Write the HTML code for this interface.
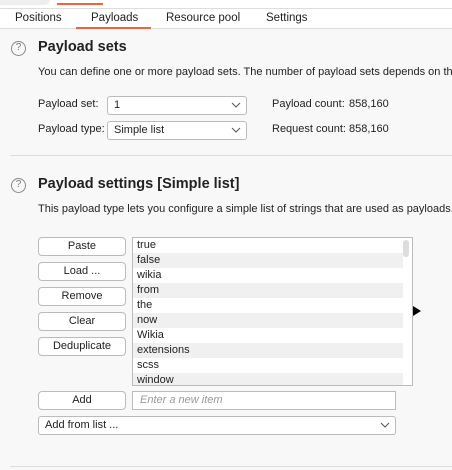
<!DOCTYPE html>
<html><head><style>
*{margin:0;padding:0;box-sizing:border-box}
body{width:452px;height:470px;overflow:hidden;background:#f8f8f8;font-family:"Liberation Sans",sans-serif;font-size:11px;color:#222;position:relative}
.a{position:absolute;white-space:nowrap}
.top{position:absolute;left:0;top:0;width:452px;height:8px;background:#fff}
.tabs{position:absolute;left:0;top:8px;width:452px;height:21px;background:#fff;border-top:1px solid #ddd;border-bottom:1px solid #ddd;font-size:11.5px}
.help{position:absolute;width:15px;height:15px;border:1.3px solid #888;border-radius:50%;font-size:10px;color:#777;text-align:center;line-height:12px}
.h{font-weight:bold;font-size:14.5px}
.dd{position:absolute;background:#fff;border:1px solid #bbb;border-radius:3px;padding-left:6px;line-height:17px}
.dd svg{position:absolute;right:5px;top:5px}
.btn{position:absolute;left:38px;width:88px;height:19px;background:#fff;border:1px solid #bbb;border-radius:4px;text-align:center;line-height:17px}
.list{position:absolute;left:132px;top:237px;width:281px;height:149px;background:#fff;border:1px solid #bbb;overflow:hidden}
.row{height:15px;line-height:14px;padding-left:4px;width:270px}
.row.s{background:#f0f0f0}
.sep{position:absolute;left:10px;width:442px;height:1px;background:#ddd}
.clip{position:absolute;left:0;top:0;width:452px;height:470px;overflow:hidden}
</style></head><body><div class="clip">
<div class="top"><div class="a" style="left:0;top:0;width:50px;height:5px;background:#eee;border-radius:0 0 6px 0"></div><div class="a" style="left:57px;top:3px;width:46px;height:2px;background:#f0643c"></div></div>
<div class="tabs">
<span class="a" style="left:15px;top:3px">Positions</span>
<span class="a" style="left:91px;top:3px">Payloads</span>
<span class="a" style="left:166px;top:3px">Resource pool</span>
<span class="a" style="left:266px;top:3px">Settings</span>
<div class="a" style="left:76px;top:18px;width:75px;height:2px;background:#f0643c"></div>
</div>
<div class="help" style="left:11px;top:41px">?</div>
<div class="a h" style="left:38px;top:39px">Payload sets</div>
<div class="a" style="left:38px;top:66px">You can define one or more payload sets. The number of payload sets depends on the at</div>
<div class="a" style="left:38px;top:98px">Payload set:</div>
<div class="dd" style="left:107px;top:96px;width:140px;height:19px">1<svg width="10" height="6"><path d="M1 1L5 5L9 1" stroke="#555" fill="none"/></svg></div>
<div class="a" style="left:38px;top:123px">Payload type:</div>
<div class="dd" style="left:107px;top:121px;width:140px;height:19px">Simple list<svg width="10" height="6"><path d="M1 1L5 5L9 1" stroke="#555" fill="none"/></svg></div>
<div class="a" style="left:272px;top:98px">Payload count:</div><div class="a" style="left:349px;top:98px">858,160</div>
<div class="a" style="left:272px;top:123px">Request count:</div><div class="a" style="left:349px;top:123px">858,160</div>
<div class="sep" style="top:155px"></div>
<div class="help" style="left:11px;top:178px">?</div>
<div class="a h" style="left:38px;top:176px">Payload settings [Simple list]</div>
<div class="a" style="left:38px;top:203px">This payload type lets you configure a simple list of strings that are used as payloads.</div>
<div class="btn" style="top:237px">Paste</div>
<div class="btn" style="top:262px">Load ...</div>
<div class="btn" style="top:287px">Remove</div>
<div class="btn" style="top:312px">Clear</div>
<div class="btn" style="top:337px">Deduplicate</div>
<div class="list">
<div class="row">true</div><div class="row s">false</div><div class="row">wikia</div><div class="row s">from</div><div class="row">the</div><div class="row s">now</div><div class="row">Wikia</div><div class="row s">extensions</div><div class="row">scss</div><div class="row s">window</div>
<div class="a" style="left:270px;top:2px;width:6px;height:17px;background:#ddd;border-radius:3px"></div>
</div>
<svg class="a" style="left:413px;top:306px" width="8" height="10"><path d="M0 0L8 5L0 10Z" fill="#000"/></svg>
<div class="btn" style="top:391px">Add</div>
<div class="a" style="left:132px;top:391px;width:264px;height:19px;background:#fff;border:1px solid #bbb;padding-left:7px;line-height:17px;color:#999;font-style:italic">Enter a new item</div>
<div class="dd" style="left:38px;top:416px;width:358px;height:19px">Add from list ...<svg width="10" height="6"><path d="M1 1L5 5L9 1" stroke="#555" fill="none"/></svg></div>
<div class="sep" style="top:466px"></div>
</div></body></html>
